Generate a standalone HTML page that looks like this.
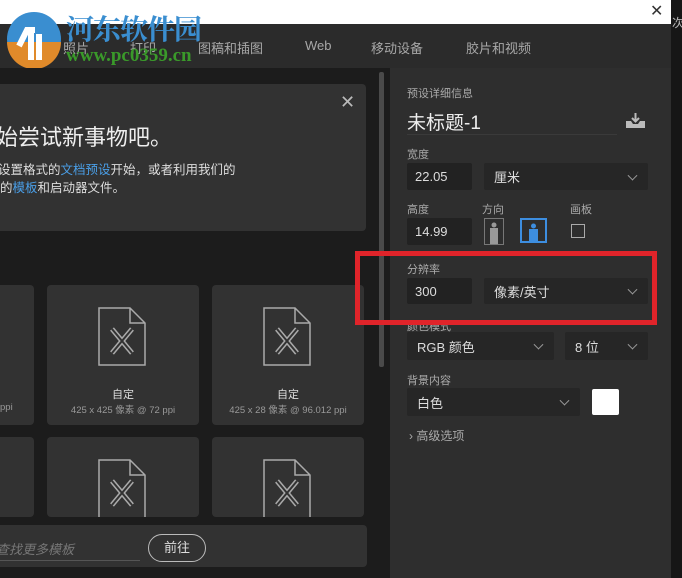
<!DOCTYPE html>
<html><head><meta charset="utf-8"><style>
*{margin:0;padding:0;box-sizing:border-box}
body{width:682px;height:578px;overflow:hidden;background:#1c1c1c;font-family:"Liberation Sans","Noto Sans CJK SC",sans-serif;position:relative;color:#ddd}
.a{position:absolute}
.lbl{position:absolute;font-size:11px;color:#aaa}
.inp{position:absolute;background:#222;border-radius:2px;color:#ddd;font-size:13px;padding-left:8px;display:flex;align-items:center}
.dd{position:absolute;background:#262626;border-radius:2px;color:#ddd;font-size:13px;padding-left:10px;display:flex;align-items:center}
.dd:after{content:"";position:absolute;right:12px;top:50%;width:6px;height:6px;border-right:1.5px solid #999;border-bottom:1.5px solid #999;transform:translateY(-70%) rotate(45deg)}
.card{position:absolute;background:#323232;border-radius:4px}
.tab{position:absolute;top:38px;font-size:13px;color:#a8a8a8}
</style></head><body>
<div class="a" style="left:0;top:0;width:671px;height:24px;background:#fff"></div>
<div class="a" style="left:650px;top:1px;font-size:16px;color:#333">✕</div>
<div class="a" style="left:671px;top:0;width:11px;height:578px;background:#161616"></div>
<div class="a" style="left:672px;top:14px;font-size:12px;color:#bbb">次</div>
<div class="a" style="left:0;top:24px;width:671px;height:44px;background:#2b2b2b"></div>
<div class="tab" style="left:63px">照片</div>
<div class="tab" style="left:130px">打印</div>
<div class="tab" style="left:198px">图稿和插图</div>
<div class="tab" style="left:305px">Web</div>
<div class="tab" style="left:371px">移动设备</div>
<div class="tab" style="left:466px">胶片和视频</div>
<svg class="a" style="left:5px;top:10px" width="58" height="58" viewBox="0 0 58 58">
<circle cx="29" cy="29" r="27" fill="#3a8ed0"/><path d="M2 32 A27 27 0 0 0 56 32 Z" fill="#e08a2a"/>
<path d="M14 36 L22 20 L30 20 M26 20 L26 50 M34 24 L34 50" stroke="#fff" stroke-width="6" fill="none"/></svg>
<div class="a" style="left:66px;top:8px;font-size:28px;font-weight:bold;color:#3a8ed0;font-family:'Noto Serif CJK SC',serif;letter-spacing:-1px">河东软件园</div>
<div class="a" style="left:66px;top:45px;font-size:19px;font-weight:bold;color:#3a9a2a;font-family:'Liberation Serif',serif">www.pc0359.cn</div>
<div class="card" style="left:-4px;top:84px;width:370px;height:147px"></div>
<div class="a" style="left:340px;top:92px;font-size:18px;color:#bbb">✕</div>
<div class="a" style="left:-4px;top:120px;font-size:22px;color:#eee">始尝试新事物吧。</div>
<div class="a" style="left:-2px;top:159px;font-size:12.5px;color:#ddd">设置格式的<span style="color:#4a9fe8">文档预设</span>开始，或者利用我们的</div>
<div class="a" style="left:0;top:177px;font-size:12.5px;color:#ddd">的<span style="color:#4a9fe8">模板</span>和启动器文件。</div>
<div class="a" style="left:379px;top:72px;width:5px;height:295px;background:#4a4a4a;border-radius:2px"></div>
<div class="card" style="left:-4px;top:285px;width:38px;height:140px"></div>
<div class="card" style="left:47px;top:285px;width:152px;height:140px"></div>
<div class="card" style="left:212px;top:285px;width:152px;height:140px"></div>
<div class="card" style="left:-4px;top:437px;width:38px;height:80px"></div>
<div class="card" style="left:47px;top:437px;width:152px;height:80px"></div>
<div class="card" style="left:212px;top:437px;width:152px;height:80px"></div>
<svg class="a" style="left:98px;top:307px" width="50" height="60" viewBox="0 0 50 60"><path d="M1 1H32L47 16V58H1Z M32 1V16H47" fill="none" stroke="#aaa" stroke-width="1.5"/><path d="M14 22L34 46M34 22L14 46" stroke="#aaa" stroke-width="5"/><path d="M14 22L34 46M34 22L14 46" stroke="#323232" stroke-width="2"/></svg>
<svg class="a" style="left:263px;top:307px" width="50" height="60" viewBox="0 0 50 60"><path d="M1 1H32L47 16V58H1Z M32 1V16H47" fill="none" stroke="#aaa" stroke-width="1.5"/><path d="M14 22L34 46M34 22L14 46" stroke="#aaa" stroke-width="5"/><path d="M14 22L34 46M34 22L14 46" stroke="#323232" stroke-width="2"/></svg>
<svg class="a" style="left:98px;top:459px" width="50" height="58" viewBox="0 0 50 58"><path d="M1 58V1H32L47 16V58 M32 1V16H47" fill="none" stroke="#aaa" stroke-width="1.5"/><path d="M14 22L34 46M34 22L14 46" stroke="#aaa" stroke-width="5"/><path d="M14 22L34 46M34 22L14 46" stroke="#323232" stroke-width="2"/></svg>
<svg class="a" style="left:263px;top:459px" width="50" height="58" viewBox="0 0 50 58"><path d="M1 58V1H32L47 16V58 M32 1V16H47" fill="none" stroke="#aaa" stroke-width="1.5"/><path d="M14 22L34 46M34 22L14 46" stroke="#aaa" stroke-width="5"/><path d="M14 22L34 46M34 22L14 46" stroke="#323232" stroke-width="2"/></svg>
<div class="a" style="left:47px;top:386px;width:152px;text-align:center;font-size:11px;color:#ddd">自定</div>
<div class="a" style="left:47px;top:402px;width:152px;text-align:center;font-size:9.5px;color:#999">425 x 425 像素 @ 72 ppi</div>
<div class="a" style="left:212px;top:386px;width:152px;text-align:center;font-size:11px;color:#ddd">自定</div>
<div class="a" style="left:212px;top:402px;width:152px;text-align:center;font-size:9.5px;color:#999">425 x 28 像素 @ 96.012 ppi</div>
<div class="a" style="left:0;top:402px;font-size:9.5px;color:#999">ppi</div>
<div class="card" style="left:-4px;top:525px;width:371px;height:42px"></div>
<div class="a" style="left:-4px;top:539px;font-size:13px;color:#777;font-style:italic">查找更多模板</div>
<div class="a" style="left:0;top:560px;width:140px;height:1px;background:#555"></div>
<div class="a" style="left:148px;top:534px;width:58px;height:28px;border:1.5px solid #bbb;border-radius:14px;font-size:13px;color:#ddd;text-align:center;line-height:25px">前往</div>
<div class="a" style="left:390px;top:68px;width:281px;height:510px;background:#2e2e2e"></div>
<div class="lbl" style="left:407px;top:85px">预设详细信息</div>
<div class="a" style="left:407px;top:108px;font-size:19px;color:#eee">未标题-1</div>
<div class="a" style="left:407px;top:134px;width:210px;height:1px;background:#3a3a3a"></div>
<svg class="a" style="left:625px;top:112px" width="21" height="17" viewBox="0 0 21 17"><path d="M10.5 1V9M7 6L10.5 9.5L14 6" stroke="#bbb" stroke-width="2" fill="none"/><path d="M1 9H6L8 12H13L15 9H20V16H1Z" fill="#bbb"/></svg>
<div class="lbl" style="left:407px;top:146px">宽度</div>
<div class="inp" style="left:407px;top:163px;width:65px;height:27px">22.05</div>
<div class="dd" style="left:484px;top:163px;width:164px;height:27px">厘米</div>
<div class="lbl" style="left:407px;top:201px">高度</div>
<div class="lbl" style="left:482px;top:201px">方向</div>
<div class="lbl" style="left:570px;top:201px">画板</div>
<div class="inp" style="left:407px;top:218px;width:65px;height:27px">14.99</div>
<svg class="a" style="left:484px;top:218px" width="20" height="27" viewBox="0 0 20 27"><rect x="0.5" y="0.5" width="19" height="26" fill="none" stroke="#777"/><circle cx="10" cy="7" r="2.5" fill="#999"/><rect x="6" y="10" width="8" height="16" fill="#999"/></svg>
<svg class="a" style="left:520px;top:218px" width="27" height="25" viewBox="0 0 27 25"><rect x="1" y="1" width="25" height="23" fill="none" stroke="#3d8ee0" stroke-width="2"/><circle cx="13.5" cy="8" r="2.5" fill="#3d8ee0"/><rect x="9" y="11" width="9" height="13" fill="#3d8ee0"/></svg>
<div class="a" style="left:571px;top:224px;width:14px;height:14px;border:1.5px solid #aaa"></div>
<div class="lbl" style="left:407px;top:261px">分辨率</div>
<div class="inp" style="left:407px;top:278px;width:65px;height:26px">300</div>
<div class="dd" style="left:484px;top:278px;width:164px;height:26px">像素/英寸</div>
<div class="lbl" style="left:407px;top:318px">颜色模式</div>
<div class="a" style="left:355px;top:251px;width:302px;height:74px;border:5px solid #e0242a"></div>
<div class="dd" style="left:407px;top:332px;width:147px;height:28px">RGB 颜色</div>
<div class="dd" style="left:565px;top:332px;width:83px;height:28px">8 位</div>
<div class="lbl" style="left:407px;top:372px">背景内容</div>
<div class="dd" style="left:407px;top:388px;width:173px;height:28px">白色</div>
<div class="a" style="left:592px;top:389px;width:27px;height:26px;background:#fff;border-radius:2px"></div>
<div class="a" style="left:409px;top:427px;font-size:12px;color:#aaa">› 高级选项</div>
</body></html>
